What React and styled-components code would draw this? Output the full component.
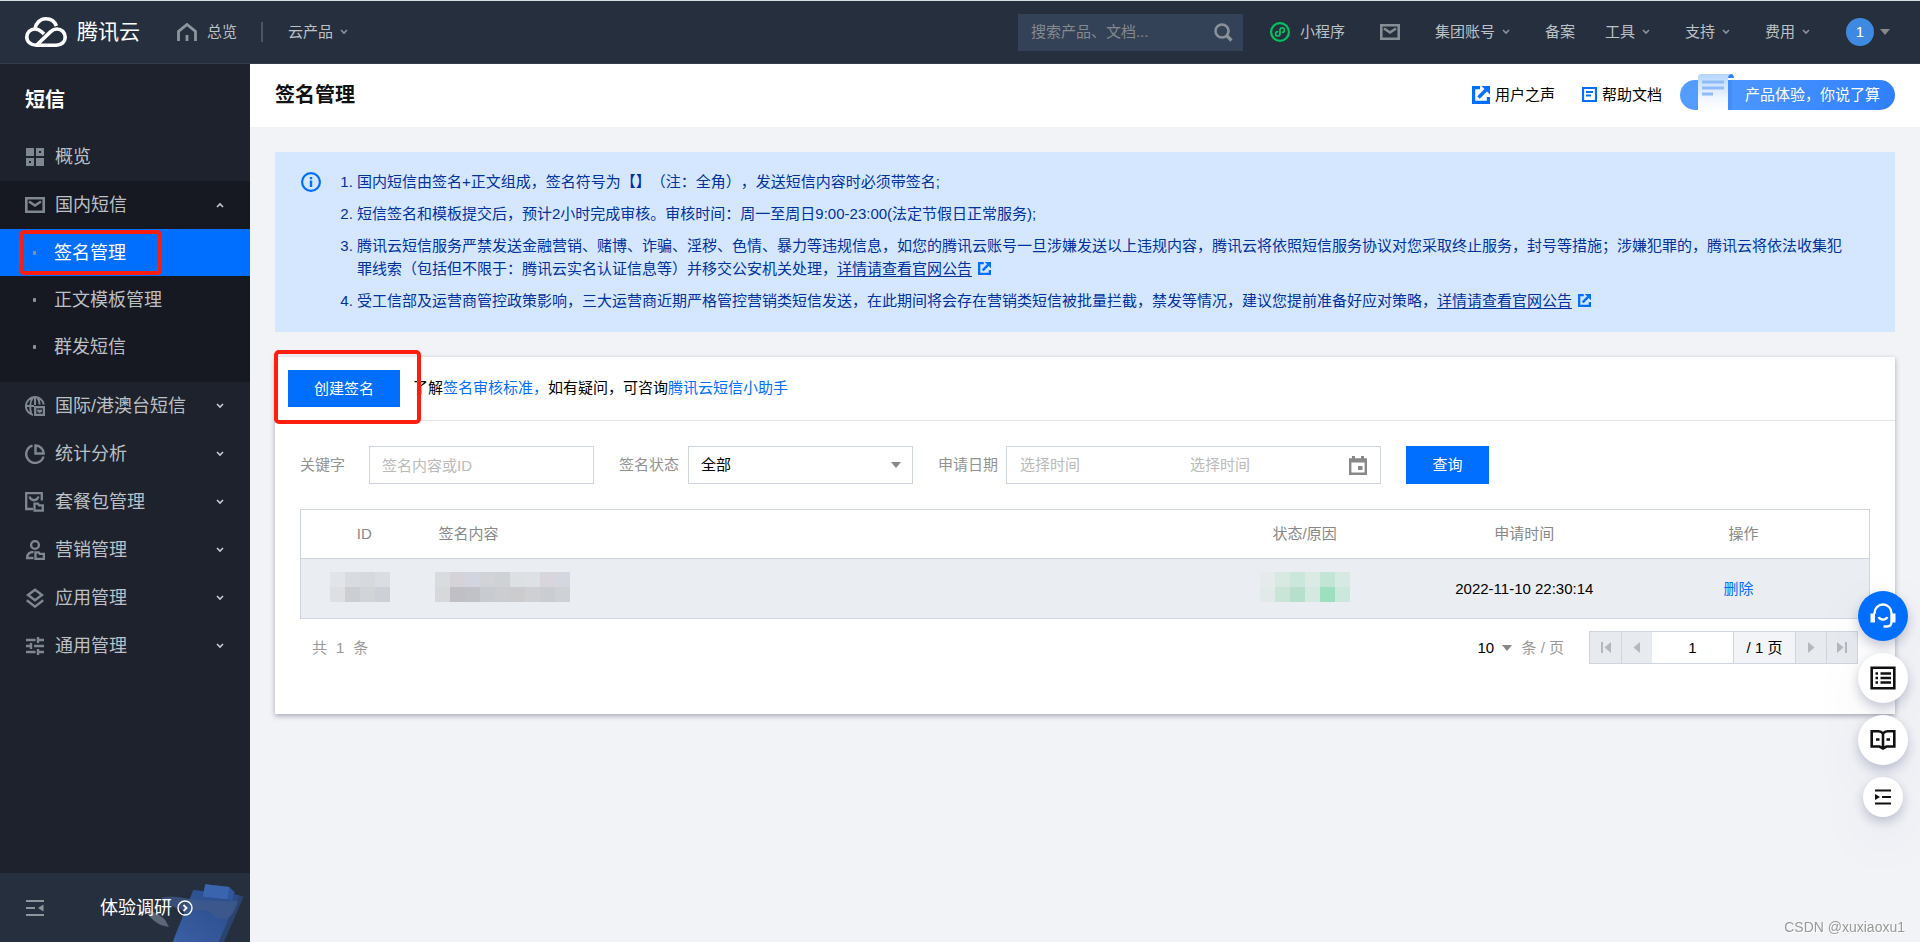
import React from "react";
import styled, { createGlobalStyle, css } from "styled-components";

const GlobalStyle = createGlobalStyle`
  *, *::before, *::after { box-sizing: border-box; }
  body {
    margin: 0;
    background: #f2f3f7;
    color: #000;
    font: 15px/22px "Liberation Sans", "Noto Sans CJK SC", sans-serif;
    text-spacing-trim: space-all;
  }
  button, input, select { font: inherit; color: inherit; }
  button { border: 0; padding: 0; background: none; cursor: pointer; }
  a { color: inherit; text-decoration: none; }
  svg { display: block; flex: none; }
  h1, h2, ul, ol, p { margin: 0; padding: 0; }
  ul { list-style: none; }
`;

/* ---------- shell ---------- */

const Page = styled.div`
  min-height: 100vh;
  display: flex;
  flex-direction: column;
`;

const Body = styled.div`
  flex: 1;
  display: flex;
`;

/* ---------- top bar ---------- */

const TopBar = styled.header`
  height: 64px;
  display: flex;
  align-items: center;
  padding: 0 30px 0 25px;
  background: #262f3e;
  border-top: 1px solid #d5dfe0;
  border-bottom: 1px solid #323f51;
  color: #bcc1c6;
  white-space: nowrap;
`;

const Brand = styled.a`
  display: flex;
  align-items: center;
  gap: 10px;
  color: #fff;
  font-size: 21px;
`;

const HomeLink = styled.a`
  display: flex;
  align-items: center;
  gap: 10px;
  margin-left: 37px;
`;

const Divider = styled.span`
  width: 2px;
  height: 20px;
  margin: 0 25px 0 24px;
  background: #4d5663;
`;

const MenuButton = styled.button`
  display: flex;
  align-items: center;
  gap: 7px;
  padding-right: 5px;
  & > svg { color: #8b939b; }
`;

const Search = styled.form`
  width: 225px;
  height: 37px;
  margin-left: auto;
  display: flex;
  align-items: center;
  padding: 0 10px 0 13px;
  background: #344258;
`;

const SearchInput = styled.input`
  flex: 1;
  min-width: 0;
  border: 0;
  padding: 0;
  outline: 0;
  background: none;
  &::placeholder { color: #86898e; opacity: 1; }
`;

const TopNav = styled.nav`
  display: flex;
  align-items: center;
  gap: 30px;
  margin-left: 27px;
`;

const MiniLink = styled.a`
  display: flex;
  align-items: center;
  gap: 10px;
`;

const MailLink = styled.a`
  padding: 0 5px;
`;

const Account = styled.button`
  display: flex;
  align-items: center;
  gap: 6px;
  padding-left: 1px;
`;

const Avatar = styled.span`
  width: 28px;
  height: 28px;
  border-radius: 50%;
  background: #3e8ae0;
  color: #fff;
  line-height: 28px;
  text-align: center;
`;

/* ---------- side bar ---------- */

const Side = styled.aside`
  flex: none;
  width: 250px;
  display: flex;
  flex-direction: column;
  background: #1e222d;
  color: #bcc0c4;
  font-size: 18px;
`;

const SideTitle = styled.h2`
  padding: 25px 25px 22px;
  color: #fff;
  font-size: 20px;
  line-height: 22px;
`;

const SideGroup = styled.li`
  background: ${(p) => (p.$open ? "#161822" : "none")};
  padding-bottom: ${(p) => (p.$open ? "12px" : "0")};
`;

const SideLink = styled.a`
  height: 48px;
  display: flex;
  align-items: center;
  gap: 10px;
  padding: 0 26px 0 25px;
  color: #bcc0c4;
  & > svg { color: #7f878f; }
  & > svg:last-child:not(:first-child) { color: #c9cccf; margin-left: auto; }
`;

const SubLink = styled.a`
  position: relative;
  height: 47px;
  display: flex;
  align-items: center;
  gap: 18px;
  padding-left: 33px;
  ${(p) => p.$active && css`
    background: #006eff;
    color: #fff;
  `}
  &::before {
    content: "";
    width: 3px;
    height: 4px;
    border-radius: 1px;
    background: #8b9299;
  }
`;

const Marker = styled.span`
  position: absolute;
  border: 4px solid #ff1d0f;
  border-radius: 5px;
  pointer-events: none;
`;

const MenuMarker = styled(Marker)`
  inset: 1px 88px 1px 19px;
`;

const CreateMarker = styled(Marker)`
  inset: -7px auto -4px -1px;
  width: 147px;
`;

const SideFoot = styled.div`
  position: relative;
  height: 69px;
  margin-top: auto;
  display: flex;
  align-items: center;
  gap: 56px;
  padding-left: 26px;
  background: #262f3e;
  color: #fff;
`;

const FootArt = styled.svg`
  position: absolute;
  right: 0;
  bottom: 0;
`;

const SurveyLink = styled.a`
  position: relative;
  display: flex;
  align-items: center;
  gap: 5px;
`;

/* ---------- main column ---------- */

const Main = styled.main`
  flex: 1;
  min-width: 0;
`;

const TitleBar = styled.div`
  height: 63px;
  display: flex;
  align-items: center;
  padding: 0 25px 2px;
  background: #fff;
`;

const Title = styled.h1`
  margin-right: auto;
  color: #111;
  font-size: 20px;
  line-height: 22px;
`;

const TitleLink = styled.a`
  display: flex;
  align-items: center;
  gap: 5px;
  margin-right: ${(p) => p.$after};
`;

const Pill = styled.a`
  position: relative;
  width: 215px;
  height: 30px;
  padding-left: 65px;
  border-radius: 15px;
  background: linear-gradient(90deg, #559dff, #2f80ff);
  color: #fff;
  line-height: 30px;
  white-space: nowrap;
`;

const PillArt = styled.svg`
  position: absolute;
  left: 13px;
  bottom: 0;
`;

const Content = styled.div`
  padding: 25px;
  display: flex;
  flex-direction: column;
  gap: 25px;
`;

const Notice = styled.section`
  display: flex;
  gap: 17px;
  padding: 18px 50px 20px 26px;
  background: #d5e7ff;
  color: #0032a0;
  & > svg { margin-top: 2px; }
`;

const NoticeList = styled.ol`
  flex: 1;
  padding-left: 19px;
  display: flex;
  flex-direction: column;
  gap: 9px;
  line-height: 23px;
`;

const NoticeLink = styled.a`
  text-decoration: underline;
  text-underline-offset: 2px;
`;

const InlineIcon = styled.span`
  display: inline-block;
  margin-left: 6px;
  vertical-align: -1px;
`;

const Card = styled.section`
  padding-bottom: 50px;
  background: #fff;
  box-shadow: 0 2px 5px rgba(54, 58, 80, 0.4);
`;

const ActionRow = styled.div`
  position: relative;
  height: 64px;
  display: flex;
  align-items: center;
  gap: 13px;
  padding: 0 13px;
  border-bottom: 1px solid #e5e5e7;
`;

const ActionNote = styled.p`
  padding-bottom: 2px;
`;

const Primary = styled.button`
  width: ${(p) => p.$w};
  height: ${(p) => p.$h};
  background: #006eff;
  color: #fff;
`;

const BlueLink = styled.a`
  color: #006eff;
`;

const Filters = styled.form`
  display: flex;
  align-items: center;
  padding: 25px;
  color: #939393;
`;

const Field = styled.div`
  display: flex;
  align-items: center;
  gap: ${(p) => p.$gap};
  margin-right: 25px;
`;

const box = css`
  height: 38px;
  border: 1px solid #cfd5de;
  border-radius: 0;
  background: #fff;
`;

const TextInput = styled.input`
  ${box}
  width: 225px;
  padding: 0 12px;
  outline: 0;
  color: #000;
  &::placeholder { color: #bbb; opacity: 1; }
`;

const SelectWrap = styled.span`
  position: relative;
  display: inline-flex;
  align-items: center;
  & > svg {
    position: absolute;
    right: ${(p) => p.$right};
    pointer-events: none;
  }
`;

const Select = styled.select`
  ${box}
  width: 225px;
  padding: 0 12px;
  appearance: none;
  color: #000;
`;

const DateBox = styled.div`
  ${box}
  width: 375px;
  display: flex;
  align-items: center;
  padding: 0 13px;
`;

const DateInput = styled.input`
  width: 170px;
  border: 0;
  padding: 0;
  outline: 0;
  background: none;
  &:nth-of-type(2) { width: 159px; }
  &::placeholder { color: #bbb; opacity: 1; }
`;

const TableWrap = styled.div`
  padding: 0 25px;
`;

const Table = styled.table`
  width: 100%;
  table-layout: fixed;
  border-collapse: collapse;
  border: 1px solid #cfd5de;
`;

const Col = styled.col`
  width: ${(p) => p.$w};
`;

const Th = styled.th`
  height: 49px;
  padding: 0 ${(p) => p.$right || "0"} 0 ${(p) => p.$left || "0"};
  color: #888;
  font-weight: 400;
  text-align: ${(p) => p.$align || "center"};
`;

const Td = styled.td`
  height: 60px;
  padding: 0 ${(p) => p.$right || "0"} ${(p) => (p.$tiles ? "4px" : "0")} ${(p) => p.$left || "0"};
  border-top: 1px solid #cfd5de;
  background: #eaedf2;
  text-align: ${(p) => p.$align || "center"};
`;

const Mosaic = styled.span`
  display: inline-grid;
  grid-template-columns: repeat(${(p) => p.$cols}, 15px);
  grid-auto-rows: 15px;
  vertical-align: middle;
`;

const Tile = styled.i`
  background: ${(p) => p.$c};
`;

const PageRow = styled.div`
  display: flex;
  align-items: center;
  padding: 12px 37px 0;
  color: #999;
`;

const Total = styled.p`
  display: flex;
  gap: 9px;
  margin-right: auto;
`;

const PerPage = styled.label`
  display: flex;
  align-items: center;
  gap: 8px;
  margin-right: 25px;
`;

const SizeSelect = styled.select`
  width: 36px;
  border: 0;
  padding: 0;
  appearance: none;
  background: none;
  color: #000;
`;

const Pager = styled.div`
  height: 33px;
  display: flex;
  border: 1px solid #cfd5de;
  background: #f2f4f8;
  color: #000;
  & > * + * { border-left: 1px solid #cfd5de; }
`;

const PagerButton = styled.button`
  width: 31px;
  display: flex;
  align-items: center;
  justify-content: center;
  background: #e7eaef;
  color: #b4b8be;
`;

const PagerInput = styled.input`
  width: 81px;
  border: 0;
  padding: 0;
  outline: 0;
  text-align: center;
  background: #fff;
`;

const PagerCount = styled.span`
  width: 62px;
  line-height: 31px;
  text-align: center;
`;

/* ---------- floating tools ---------- */

const Tools = styled.div`
  position: fixed;
  right: 12px;
  top: 591px;
  display: flex;
  flex-direction: column;
  align-items: center;
  gap: 12px;
`;

const Tool = styled.button`
  width: ${(p) => p.$size};
  height: ${(p) => p.$size};
  display: flex;
  align-items: center;
  justify-content: center;
  border-radius: 50%;
  background: ${(p) => (p.$main ? "#006eff" : "#fff")};
  color: ${(p) => (p.$main ? "#fff" : "#111")};
  box-shadow: 0 5px 12px rgba(55, 70, 110, 0.28), 0 20px 60px rgba(55, 70, 110, 0.07);
`;

const Watermark = styled.p`
  position: fixed;
  right: 15px;
  bottom: 4px;
  color: #999;
  font-size: 14px;
  text-shadow: 1px 1px 0 #fff;
`;

/* ---------- icons ---------- */

const Ico = ({ w = 20, h = 20, vb, children, ...rest }) => (
  <svg width={w} height={h} viewBox={vb || `0 0 ${w} ${h}`} fill="none" stroke="currentColor" strokeWidth="2" aria-hidden="true" {...rest}>
    {children}
  </svg>
);

const Chevron = ({ up }) => (
  <Ico w={8} h={6} strokeWidth="1.6">
    <path d={up ? "M1 5l3-3 3 3" : "M1 1l3 3 3-3"} />
  </Ico>
);

const Caret = ({ color = "#888" }) => (
  <Ico w={10} h={6} stroke="none"><path d="M0 0h10L5 6z" fill={color} /></Ico>
);

const CloudLogo = () => (
  <Ico w={42} h={30} stroke="#fff" strokeWidth="3.6">
    <path d="M10.500 28.200H31.500C36.500 28.200 40.200 24.700 40.200 20.200C40.200 15.600 36.600 12 32 12C29.400 12 27.300 13.100 25.400 14.900L11.500 28.200C5.900 28.200 1.800 24.800 1.800 20C1.800 15.400 5.500 12 10 12C13 12 15.100 13.200 17.200 15.300L19 17" />
    <path d="M9.800 12.200C10.800 6 15.300 1.800 21 1.800C26 1.800 29.700 4.500 31.400 9" />
  </Ico>
);

const Home = () => (
  <Ico w={20} h={18} stroke="#8d959d"><path d="M1.500 18V8.500L10 1.500l8.500 7V18M10 12v6" strokeWidth="2.800" /></Ico>
);

const Mail = ({ color = "currentColor" }) => (
  <Ico w={20} h={16} stroke={color}><path d="M1.300 1.300h17.400v13.400H1.300zM4 4.500l6 4 6-4" strokeWidth="2.600" /></Ico>
);

const SearchIcon = () => (
  <Ico w={19} h={19} stroke="#8a9299" strokeWidth="2.600"><circle cx="8" cy="8" r="6.500" /><path d="M12.500 12.500l5 5" strokeWidth="3.200" /></Ico>
);

const Mini = () => (
  <Ico stroke="#07c160">
    <circle cx="10" cy="10" r="8.900" strokeWidth="2.200" />
    <path d="M7.600 9.600a2.200 2.200 0 1 0 2.400 2.300V8a2.200 2.200 0 1 1 2.500 2.300" strokeWidth="1.700" strokeLinecap="round" />
  </Ico>
);

const Overview = () => (
  <Ico stroke="none" fill="currentColor">
    <path d="M1 1h8v8H1zM11 11h8v8h-8z" />
    <path fillRule="evenodd" d="M11 1h8v8h-8zM14 4v2h2v-2zM1 11h8v8H1zM4 14v2h2v-2z" />
  </Ico>
);

const GlobeMail = () => (
  <Ico strokeWidth="2">
    <path d="M18.800 8.500A9 9 0 1 0 8 18.900M1 10h8M10 1v8M6.200 17.500C4.700 12 5 5 8 1.300M12 1.300c1.500 1.600 2.400 4 2.700 7.200" />
    <path d="M10.200 11.200h8.800v7.800h-8.800zM12.500 14l2.200 1.800 2.200-1.800" strokeWidth="2.300" />
  </Ico>
);

const Pie = () => (
  <Ico strokeWidth="2.400">
    <path d="M7.500 1.700A8.800 8.800 0 1 0 18.500 12.500" />
    <path d="M10.500 1.500V9.500h8.200C18.500 5 15 1.800 10.500 1.500z" />
  </Ico>
);

const Bundle = () => (
  <Ico strokeWidth="2.300">
    <path d="M8 17H1.200V1.200h15.600v7.300M4.500 4.500c1.500 5 7.500 5 9 0" />
    <path d="M9.500 18.700v-7h3.500l1 1.700h3.800v5.300z" />
  </Ico>
);

const UserCard = () => (
  <Ico strokeWidth="2.400">
    <circle cx="10" cy="5" r="3.900" />
    <path d="M8.500 18H2.100c0-4 2.400-6 6.400-6" />
    <path d="M10.500 18.900v-6.500h3.200l1 1.500h4.200v5z" />
  </Ico>
);

const Layers = () => (
  <Ico strokeWidth="2.400"><path d="M10 1.700L17 7l-7 5.300L3 7z" /><path d="M1.800 12.300L10 18.600l8.200-6.300" /></Ico>
);

const Sliders = () => (
  <Ico strokeWidth="2.400"><path d="M1 4h9.500M13 4h6M13 1v6M1 10h5M6 7v6M9 10h10M1 16h9.500M13 16h6M13 13v6" /></Ico>
);

const Collapse = () => (
  <Ico w={18} h={16} stroke="#8d959d"><path d="M0 1h18M0 8h9M0 15h18" /><path d="M17.500 4.500v7L12 8z" fill="#8d959d" stroke="none" /></Ico>
);

const CircleArrow = () => (
  <Ico w={16} h={16} stroke="#fff" strokeWidth="1.400"><circle cx="8" cy="8" r="7" /><path d="M6.500 5l3 3-3 3" strokeWidth="1.800" /></Ico>
);

const External = ({ size = 18 }) => (
  <Ico w={size} h={size} vb="0 0 18 18" stroke="#006eff">
    <path d="M8 1.500H1.500v15h15V11" strokeWidth="3.400" />
    <path d="M6.500 11.500L14 4" strokeWidth="3.400" />
    <path d="M9.500 0H18v8.500z" fill="#006eff" stroke="none" />
  </Ico>
);

const Doc = () => (
  <Ico w={15} h={15} stroke="#006eff"><path d="M1 1h13v13H1zM4 5h7M4 8.500h5" strokeWidth="2.200" /></Ico>
);

const Info = () => (
  <Ico stroke="#006eff"><circle cx="10" cy="10" r="8.900" strokeWidth="2.200" /><path d="M10 8.500V15M10 5v2.200" strokeWidth="2.400" /></Ico>
);

const Calendar = () => (
  <Ico w={18} h={19} stroke="#888">
    <path d="M1.200 3.500h15.600v14.300H1.200z" strokeWidth="2.400" />
    <path d="M1 5h16M4.500 0v4M13.500 0v4" strokeWidth="3" />
    <path d="M9 10h4.500v4H9z" fill="#888" stroke="none" />
  </Ico>
);

const Step = ({ back, edge }) => (
  <Ico w={10} h={11} stroke="none" fill="currentColor">
    <g transform={back ? "matrix(-1 0 0 1 10 0)" : undefined}>
      <path d={edge ? "M0 0l6.500 5.500L0 11zM8 0h2v11H8z" : "M2 0l6.500 5.500L2 11z"} />
    </g>
  </Ico>
);

const Headset = () => (
  <Ico w={26} h={26} strokeWidth="2.400">
    <path d="M4.500 11V10a8.500 8.500 0 0 1 17 0v9c0 3-1.500 4.500-4.500 4.500h-3.500" />
    <path d="M.5 10.500h4.500v9h-4.500zM21 10.500h4.500v9h-4.500z" fill="currentColor" stroke="none" />
    <path d="M8.800 14c1 3.500 7.400 3.500 8.400 0" />
  </Ico>
);

const ListBox = () => (
  <Ico w={26} h={24} strokeWidth="2.600">
    <path d="M1.700 1.700h22.600v20.600H1.700z" />
    <path d="M10.500 7.500H21M10.500 12H21M10.500 16.500H21M5.500 7.500H8M5.500 12H8M5.500 16.500H8" strokeWidth="2.400" />
  </Ico>
);

const Book = () => (
  <Ico w={26} h={22} strokeWidth="2.600">
    <path d="M13 4.500C11.500 2.500 10.500 2.200 8.500 2.200H1.700v15.300H9.500L13 19.500l3.500-2h7.800V2.200h-6.800c-2 0-3 .3-4.500 2.300zM13 4.500v15M6 10.500h3.500M16.500 10.500h3.500" />
  </Ico>
);

const Expand = () => (
  <Ico w={16} h={16}><path d="M0 1.500h16M7 8h9M0 14.500h16" /><path d="M0 5v6l5-3z" fill="currentColor" stroke="none" /></Ico>
);

/* ---------- data ---------- */

const groups = [
  { icon: <GlobeMail />, label: "国际/港澳台短信" },
  { icon: <Pie />, label: "统计分析" },
  { icon: <Bundle />, label: "套餐包管理" },
  { icon: <UserCard />, label: "营销管理" },
  { icon: <Layers />, label: "应用管理" },
  { icon: <Sliders />, label: "通用管理" },
];

const idTiles = ["#e1e4e8", "#dadbdf", "#d6dadf", "#dadde2", "#dddfe2", "#cbced3", "#d1d5d8", "#cdd0d7"];
const nameTiles = [
  "#d9dcdf", "#d5d2d8", "#d2d5df", "#d1d3d7", "#cfd2d5", "#dce0e3", "#dde0e4", "#d8d6dc", "#d4d7e0",
  "#d7d8da", "#c0bfc6", "#c1c1c8", "#c8cbcf", "#cbcdd1", "#cccccf", "#cfd0d3", "#cacdd2", "#ced1d5",
];
const stateTiles = [
  "#e5ebea", "#d8e9e2", "#cbe6da", "#dceae6", "#c2e5d5", "#d6e9e2",
  "#e1eae8", "#c8e5d8", "#b7dfcb", "#d5e8e1", "#9ddfbf", "#cce7dc",
];

const Tiles = ({ cols, colors }) => (
  <Mosaic $cols={cols} aria-hidden="true">
    {colors.map((c, i) => <Tile key={i} $c={c} />)}
  </Mosaic>
);

const Menu = ({ children }) => (
  <MenuButton type="button">{children}<Chevron /></MenuButton>
);

export default function App() {
  return (
    <Page>
      <GlobalStyle />
      <TopBar>
        <Brand href="#"><CloudLogo />腾讯云</Brand>
        <HomeLink href="#"><Home />总览</HomeLink>
        <Divider />
        <Menu>云产品</Menu>
        <Search role="search">
          <SearchInput placeholder="搜索产品、文档..." aria-label="搜索产品、文档" />
          <SearchIcon />
        </Search>
        <TopNav>
          <MiniLink href="#"><Mini />小程序</MiniLink>
          <MailLink href="#" aria-label="站内信"><Mail color="#858d95" /></MailLink>
          <Menu>集团账号</Menu>
          <a href="#">备案</a>
          <Menu>工具</Menu>
          <Menu>支持</Menu>
          <Menu>费用</Menu>
          <Account type="button"><Avatar>1</Avatar><Caret /></Account>
        </TopNav>
      </TopBar>

      <Body>
        <Side>
          <SideTitle>短信</SideTitle>
          <ul>
            <SideGroup><SideLink href="#"><Overview />概览</SideLink></SideGroup>
            <SideGroup $open>
              <SideLink href="#"><Mail />国内短信<Chevron up /></SideLink>
              <SubLink href="#" $active>签名管理<MenuMarker /></SubLink>
              <SubLink href="#">正文模板管理</SubLink>
              <SubLink href="#">群发短信</SubLink>
            </SideGroup>
            {groups.map((g) => (
              <SideGroup key={g.label}>
                <SideLink href="#">{g.icon}{g.label}<Chevron /></SideLink>
              </SideGroup>
            ))}
          </ul>
          <SideFoot>
            <FootArt width="110" height="69" viewBox="0 0 330 207" aria-hidden="true">
              <defs>
                <linearGradient id="board" x1="0" y1="1" x2="1" y2="0">
                  <stop offset="0" stopColor="#3a5fa3" />
                  <stop offset="1" stopColor="#284a88" />
                </linearGradient>
              </defs>
              <path d="M160 51L296 66 311 71 252 207H98z" fill="#2b446f" />
              <path d="M160 51L296 66 236 207H98z" fill="url(#board)" />
              <path d="M64 74C110 66 130 78 190 82L294 84C284 120 270 142 244 138 212 132 214 112 196 112 150 114 110 120 64 74z" fill="#40598a" opacity="0.75" />
              <path d="M196 34L268 42 284 58 276 82 188 71z" fill="#31569c" />
              <path d="M196 34L268 42 262 79 188 71z" fill="#3a64ad" />
              <path d="M8 106C30 108 66 130 76 142L87 162 64 157C44 148 26 130 8 106z" fill="#5b6679" />
            </FootArt>
            <Collapse />
            <SurveyLink href="#">体验调研<CircleArrow /></SurveyLink>
          </SideFoot>
        </Side>

        <Main>
          <TitleBar>
            <Title>签名管理</Title>
            <TitleLink href="#" $after="27px"><External />用户之声</TitleLink>
            <TitleLink href="#" $after="18px"><Doc />帮助文档</TitleLink>
            <Pill href="#">
              <PillArt width="46" height="38" viewBox="0 0 46 38" aria-hidden="true">
                <defs>
                  <linearGradient id="sheet" x1="0" y1="0" x2="0" y2="1">
                    <stop offset="0" stopColor="#b5d5ff" />
                    <stop offset="0.700" stopColor="#f3f8ff" />
                    <stop offset="1" stopColor="#fff" />
                  </linearGradient>
                </defs>
                <path d="M35 8h4v30h-4z" fill="#2a6fe0" opacity="0.250" />
                <path d="M35 6c0-3 1-4 3-4s3 2 3 4z" fill="#2f83f5" />
                <path d="M5 38V6c0-3 1-4 4-4h29c-2 0-3 1-3 4v32z" fill="url(#sheet)" />
                <path d="M9 10h22M9 16h22M9 22h11" stroke="#8fbcf9" strokeWidth="3" />
              </PillArt>
              产品体验，你说了算
            </Pill>
          </TitleBar>

          <Content>
            <Notice>
              <Info />
              <NoticeList>
                <li>国内短信由签名+正文组成，签名符号为【】（注：全角），发送短信内容时必须带签名;</li>
                <li>短信签名和模板提交后，预计2小时完成审核。审核时间：周一至周日9:00-23:00(法定节假日正常服务);</li>
                <li>
                  腾讯云短信服务严禁发送金融营销、赌博、诈骗、淫秽、色情、暴力等违规信息，如您的腾讯云账号一旦涉嫌发送以上违规内容，腾讯云将依照短信服务协议对您采取终止服务，封号等措施；涉嫌犯罪的，腾讯云将依法收集犯罪线索（包括但不限于：腾讯云实名认证信息等）并移交公安机关处理，<NoticeLink href="#">详情请查看官网公告</NoticeLink>
                  <InlineIcon><External size={13} /></InlineIcon>
                </li>
                <li>
                  受工信部及运营商管控政策影响，三大运营商近期严格管控营销类短信发送，在此期间将会存在营销类短信被批量拦截，禁发等情况，建议您提前准备好应对策略，<NoticeLink href="#">详情请查看官网公告</NoticeLink>
                  <InlineIcon><External size={13} /></InlineIcon>
                </li>
              </NoticeList>
            </Notice>

            <Card>
              <ActionRow>
                <Primary type="button" $w="112px" $h="37px">创建签名</Primary>
                <ActionNote>
                  了解<BlueLink href="#">签名审核标准，</BlueLink>如有疑问，可咨询<BlueLink href="#">腾讯云短信小助手</BlueLink>
                </ActionNote>
                <CreateMarker />
              </ActionRow>

              <Filters>
                <Field $gap="24px">
                  <label htmlFor="keyword">关键字</label>
                  <TextInput id="keyword" placeholder="签名内容或ID" />
                </Field>
                <Field $gap="9px">
                  <label htmlFor="status">签名状态</label>
                  <SelectWrap $right="12px">
                    <Select id="status"><option>全部</option></Select>
                    <Caret />
                  </SelectWrap>
                </Field>
                <Field $gap="8px">
                  <label htmlFor="from">申请日期</label>
                  <DateBox>
                    <DateInput id="from" placeholder="选择时间" />
                    <DateInput aria-label="结束日期" placeholder="选择时间" />
                    <Calendar />
                  </DateBox>
                </Field>
                <Primary type="button" $w="83px" $h="38px">查询</Primary>
              </Filters>

              <TableWrap>
                <Table>
                  <colgroup>
                    <Col $w="127px" />
                    <Col />
                    <Col $w="14%" />
                    <Col $w="14%" />
                    <Col $w="15%" />
                  </colgroup>
                  <thead>
                    <tr>
                      <Th scope="col">ID</Th>
                      <Th scope="col" $align="left" $left="11px">签名内容</Th>
                      <Th scope="col">状态/原因</Th>
                      <Th scope="col">申请时间</Th>
                      <Th scope="col" $right="16px">操作</Th>
                    </tr>
                  </thead>
                  <tbody>
                    <tr>
                      <Td $tiles $right="8px"><Tiles cols={4} colors={idTiles} /></Td>
                      <Td $tiles $align="left" $left="7px"><Tiles cols={9} colors={nameTiles} /></Td>
                      <Td $tiles><Tiles cols={6} colors={stateTiles} /></Td>
                      <Td>2022-11-10 22:30:14</Td>
                      <Td $right="26px"><BlueLink href="#">删除</BlueLink></Td>
                    </tr>
                  </tbody>
                </Table>
              </TableWrap>

              <PageRow>
                <Total><span>共</span><span>1</span><span>条</span></Total>
                <PerPage>
                  <SelectWrap $right="1px">
                    <SizeSelect aria-label="每页条数"><option>10</option></SizeSelect>
                    <Caret />
                  </SelectWrap>
                  条 / 页
                </PerPage>
                <Pager>
                  <PagerButton type="button" aria-label="首页"><Step back edge /></PagerButton>
                  <PagerButton type="button" aria-label="上一页"><Step back /></PagerButton>
                  <PagerInput aria-label="页码" defaultValue="1" />
                  <PagerCount>/ 1 页</PagerCount>
                  <PagerButton type="button" aria-label="下一页"><Step /></PagerButton>
                  <PagerButton type="button" aria-label="末页"><Step edge /></PagerButton>
                </Pager>
              </PageRow>
            </Card>
          </Content>
        </Main>
      </Body>

      <Tools>
        <Tool type="button" $size="50px" $main aria-label="在线客服"><Headset /></Tool>
        <Tool type="button" $size="50px" aria-label="反馈"><ListBox /></Tool>
        <Tool type="button" $size="50px" aria-label="文档"><Book /></Tool>
        <Tool type="button" $size="40px" aria-label="展开"><Expand /></Tool>
      </Tools>
      <Watermark>CSDN @xuxiaoxu1</Watermark>
    </Page>
  );
}
